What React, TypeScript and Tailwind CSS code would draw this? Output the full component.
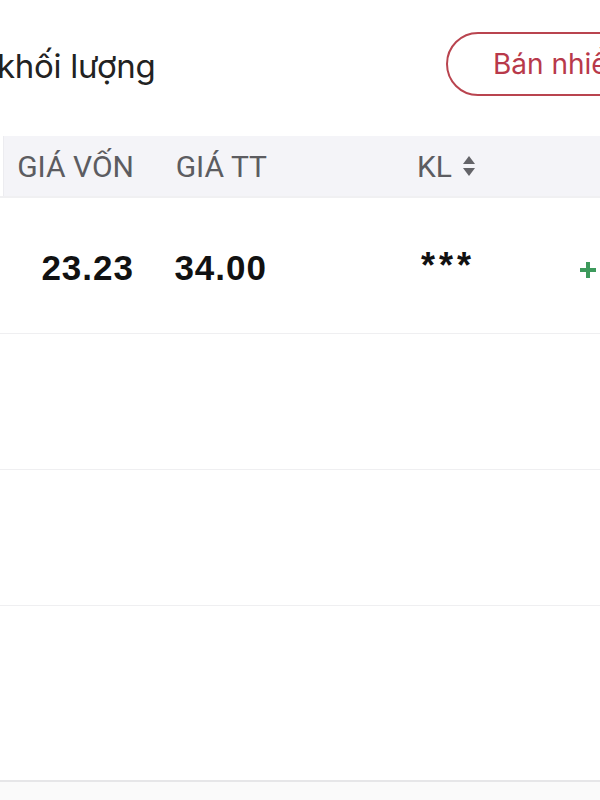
// Holdings table — "Bán theo khối lượng" panel, cropped view

const rows = [
  { cost: '23.23', price: '34.00', qty: '***' },
  null,
  null,
]

function SortIcon() {
  return (
    <svg width="14" height="22" viewBox="0 0 14 22" className="ml-[10px] text-[#646469]" aria-hidden>
      <path d="M7 1 L13 9 H1 Z" fill="currentColor" />
      <path d="M7 21 L13 13 H1 Z" fill="currentColor" />
    </svg>
  )
}

function PlusIcon() {
  return (
    <svg width="18" height="18" viewBox="0 0 18 18" aria-hidden>
      <path d="M9 1 V17 M1 9 H17" stroke="#3d9a5c" strokeWidth="4" />
    </svg>
  )
}

export default function App() {
  return (
    <div className="relative w-[600px] h-[800px] overflow-hidden bg-white font-['Roboto',sans-serif]">
      {/* Title + action */}
      <div className="flex items-center h-[136px] pb-[8px]">
        <h1 className="ml-[-3px] mt-[4px] text-[33px] leading-none text-[#222] font-['Inter',sans-serif] whitespace-nowrap tracking-[-0.3px]">
          khối lượng
        </h1>
        <button className="ml-auto mr-[-200px] h-[64px] w-[354px] shrink-0 rounded-full border-2 border-[#b9444f] pl-[45px] text-left text-[28px] text-[#b8394a] font-['Inter',sans-serif] whitespace-nowrap">
          Bán nhiều lần
        </button>
      </div>

      {/* Table header */}
      <div className="ml-[3px] flex items-center h-[60px] bg-[#f4f4f8] border-l border-[#ececf0] text-[30px] text-[#5c5c61]">
        <div className="w-[130px] text-right">GIÁ VỐN</div>
        <div className="w-[133px] text-right">GIÁ TT</div>
        <div className="ml-[150px] flex items-center">
          <span>KL</span>
          <SortIcon />
        </div>
      </div>
      <div className="h-[2px] bg-[#f0f0f2]" />

      {/* Rows */}
      {rows.map((r, i) => (
        <div key={i} className="flex h-[136px] border-b border-[#efeff1] font-['Liberation_Sans',sans-serif]">
          {r && (
            <>
              <div className="w-[134px] pt-[52px] text-right text-[35px] font-bold leading-none text-[#111] tracking-[1px]">
                {r.cost}
              </div>
              <div className="w-[133px] pt-[52px] text-right text-[35px] font-bold leading-none text-[#111] tracking-[1px]">
                {r.price}
              </div>
              <div className="ml-[154px] pt-[50px] text-[36px] font-bold leading-none text-[#111] tracking-[4px]">
                {r.qty}
              </div>
              <div className="ml-auto mr-[3px] pt-[63px]">
                <PlusIcon />
              </div>
            </>
          )}
        </div>
      ))}
      <div className="h-[176px] border-b-2 border-[#e6e6e8]" />
      <div className="h-[20px] bg-[#fafafa]" />
    </div>
  )
}
